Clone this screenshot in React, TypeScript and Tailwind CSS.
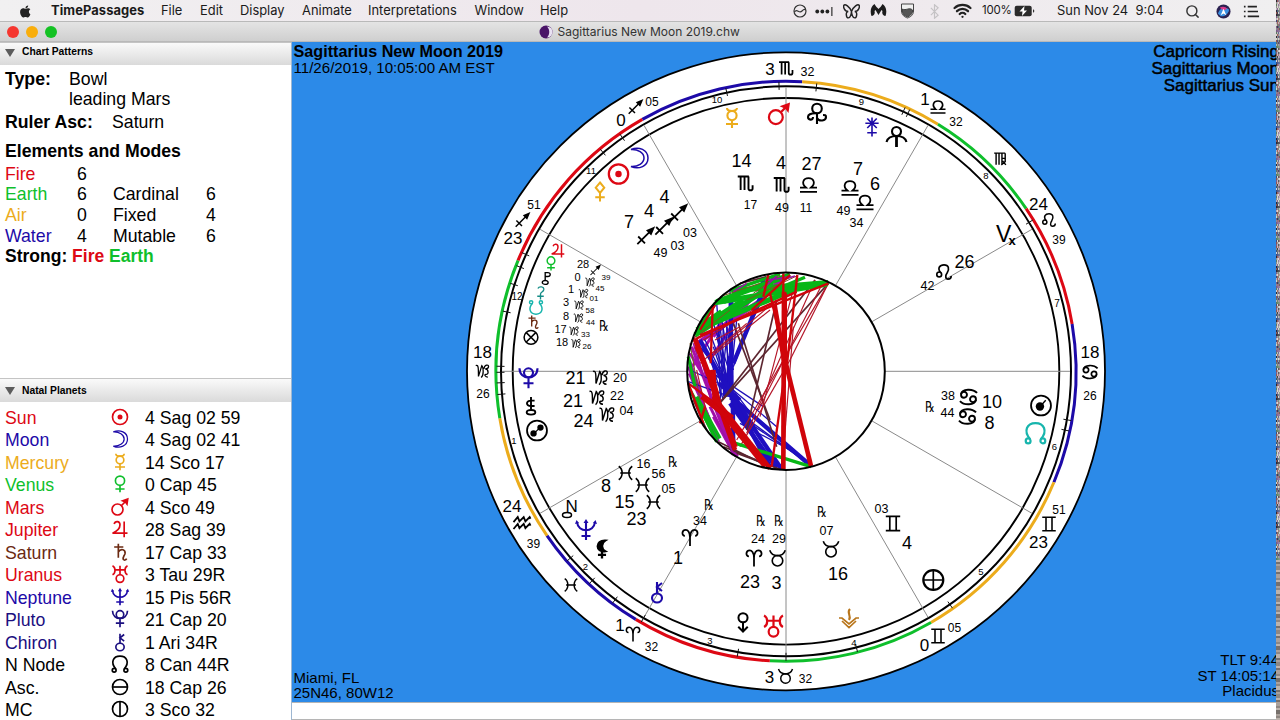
import { Search, Wifi } from "lucide-react";
import type { ReactNode } from "react";

const RED = "#dd0814";
const GREEN = "#0fbf2c";
const GOLD = "#ecac1c";
const BLUE = "#1d0aa8";
const BROWN = "#6b2a12";
const TEAL = "#17b5ad";

const CX = 786;
const CY = 371.3;

const polar = (deg: number, r: number) => {
  const a = (deg * Math.PI) / 180;
  return { x: CX + r * Math.cos(a), y: CY - r * Math.sin(a) };
};

// Every glyph is drawn around 0,0 in a box of about 20 units
const glyphs: Record<string, ReactNode> = {
  sun: (
    <>
      <circle r="9" />
      <circle r="3" fill="currentColor" stroke="none" />
    </>
  ),
  moon: (
    <path d="M-8-8.5C0-12 9-8 9 0S0 12-8 8.5C-1 9 5 5 5 0S-1-9-8-8.5Z" strokeWidth="1.5" />
  ),
  mercury: (
    <>
      <path d="M-5-10C-5-6 5-6 5-10M0 2.5V10M-6 6H6" />
      <circle cy="-2.4" r="4.6" />
    </>
  ),
  venus: (
    <>
      <circle cy="-4" r="5.5" />
      <path d="M0 1.5V10M-5.5 6H5.5" />
    </>
  ),
  mars: (
    <>
      <circle cx="-3" cy="3" r="6.6" />
      <path d="M1.5-1.5L8-8" />
      <path d="M10.5-11L9-1 6-5 .5-7.5Z" fill="currentColor" stroke="none" />
    </>
  ),
  jupiter: <path d="M-7-6C-6-10 0-10 0-5S-4 3-9 5H9M5-9V10" />,
  saturn: <path d="M-2-10V7M-7-6H4M-2 0C1-5 7-3 6 2 5 5 3 6 4 9 5 10 7 10 8 8" />,
  uranus: (
    <>
      <path d="M-9-10C-5-8-5-1-9 1M9-10C5-8 5-1 9 1M-6-5H6M0-10V1" />
      <circle cy="5.5" r="4.6" />
    </>
  ),
  neptune: (
    <>
      <path d="M-9-8C-8 3 8 3 9-8M0-8V10M-4.5 6H4.5" />
      <path
        d="M-11-6L-9.5-10-7-7ZM11-6L9.5-10 7-7ZM-2.5-7L0-11 2.5-7Z"
        fill="currentColor"
        stroke="none"
      />
    </>
  ),
  pluto: (
    <>
      <path d="M-9-10C-9 2.5 9 2.5 9-10M0-.5V10M-5 5H5" />
      <circle cy="-5.5" r="4.5" />
    </>
  ),
  chiron: (
    <>
      <path d="M0-10V1.5M5-9L0-5 5-1" />
      <ellipse cy="6" rx="5" ry="4.5" />
    </>
  ),
  node: (
    <>
      <path d="M-5 6C-12-2-8-9.5 0-9.5S12-2 5 6" />
      <circle cx="-7" cy="7.5" r="2.3" />
      <circle cx="7" cy="7.5" r="2.3" />
    </>
  ),
  snode: (
    <>
      <path d="M-5-6C-12 2-8 9.5 0 9.5S12 2 5-6" />
      <circle cx="-7" cy="-7.5" r="2.3" />
      <circle cx="7" cy="-7.5" r="2.3" />
    </>
  ),
  asc: (
    <>
      <circle r="9" />
      <path d="M-9 0H9" />
    </>
  ),
  mc: (
    <>
      <circle r="9" />
      <path d="M0-9V9" />
    </>
  ),
  ceres: <path d="M-4-7C-2-11 6-10 5-5 4-1 0-2 0 2V10M-5 5H5" />,
  pholus: (
    <>
      <path d="M-2 3V-9H2C7-9 7-3 2-3H-2" />
      <ellipse cx="-2" cy="6" rx="4.5" ry="3" />
    </>
  ),
  chariklo: (
    <>
      <path d="M0-10V4M4-6H0C-6-6-6 0 0 0H4" />
      <ellipse cy="7" rx="4.8" ry="2.6" />
    </>
  ),
  fortune: (
    <>
      <circle r="9.5" />
      <path d="M-6.5-6.5L6.5 6.5M6.5-6.5L-6.5 6.5" />
    </>
  ),
  binary: (
    <>
      <circle r="9.5" strokeWidth="1.7" />
      <path d="M-3 3L3-3" strokeWidth="1.2" />
      <circle cx="-3.3" cy="2.8" r="3" fill="currentColor" stroke="none" />
      <circle cx="3.3" cy="-2.8" r="3" fill="currentColor" stroke="none" />
    </>
  ),
  comet: (
    <>
      <circle r="9.5" strokeWidth="1.7" />
      <path d="M0 0L4.5-5" strokeWidth="1.3" />
      <circle cx="-1" cy="1" r="4" fill="currentColor" stroke="none" />
    </>
  ),
  pallas: <path d="M0-10L4.5-4.5 0 1-4.5-4.5ZM0 1V10M-5 5.5H5" />,
  sedna: (
    <>
      <circle cy="-5.5" r="4.8" />
      <path d="M0-.7C-7-1-9 1-9 3-9 6-4 7-4 3M0-.7V10M0 4C2 8 9 7 9 3 9 1 8 1 6 1" />
    </>
  ),
  orcus: (
    <>
      <circle cy="-5.5" r="4.5" />
      <path d="M-10 5C-9 1-5-1 0-1S9 1 10 5" />
      <path d="M0-1V10" strokeWidth="2.8" />
    </>
  ),
  juno: (
    <path d="M0-10V10M-7-4H7M-5-9L5 1M5-9L-5 1M-5 6H5" strokeWidth="1.7" />
  ),
  eris: (
    <>
      <circle cy="-5.5" r="4.8" />
      <path d="M0-1V9M-5 4L0 9 5 4" />
    </>
  ),
  vesta: (
    <>
      <path d="M-10-1H-7L0 5 7-1H10M-7 2L0 8.5 7 2" strokeWidth="1.7" />
      <path d="M1-10C-3-6 3-4 0 1" />
    </>
  ),
  earth: (
    <>
      <circle r="9.5" />
      <path d="M-9 0H9M0-9V9" strokeWidth="1.6" />
    </>
  ),
  lilith: (
    <>
      <path d="M4-10C-8-11-8 4 4 2-1-1-1-7 4-10Z" fill="currentColor" />
      <path d="M0 2V10M-4.5 6H4.5" strokeWidth="2.6" />
    </>
  ),
  aries: (
    <path d="M0 10V0C0-7-3-9-5-9-10-9-10-2-6-2M0 0C0-7 3-9 5-9 10-9 10-2 6-2" />
  ),
  taurus: (
    <>
      <circle cy="3.5" r="6.8" />
      <path d="M-10-10C-8-4-4-3 0-3S8-4 10-10" />
    </>
  ),
  gemini: <path d="M-9-9H9M-9 9H9M-4-9V9M4-9V9" />,
  cancer: (
    <>
      <circle cx="-5" cy="-2.5" r="3.3" />
      <circle cx="5" cy="2.5" r="3.3" />
      <path d="M-8.3-3C-7-9.5 5-9.5 9.5-4.5M8.3 3C7 9.5-5 9.5-9.5 4.5" />
    </>
  ),
  leo: (
    <>
      <circle cx="-6" cy="3" r="3" />
      <path d="M-4 1C-9-5-5-9 0-9 6-9 7-4 4 1 1 5 2 9 5 9 8 9 9 7 9 5" />
    </>
  ),
  virgo: (
    <path
      d="M-9-9H8M-6-9V9M-1.5-9V9M3-9V9M3-1H8V-9M8-1V4L2 9M4 3L9 9"
      strokeWidth="2.2"
    />
  ),
  libra: <path d="M-10 8H10M-10 3H-3C-9-2-6-8 0-8S9-2 3 3H10" />,
  scorpio: (
    <path
      d="M-10-8.5H3.5M-6.5-8.5V8M-1.8-8.5V8M3-8.5V6C3 9 8 9 8 6V2"
      strokeWidth="2.3"
    />
  ),
  sagittarius: (
    <>
      <path d="M-9 9L7-7M-8 0L0 8" />
      <path d="M10-10L3-7 7-3Z" fill="currentColor" />
    </>
  ),
  capricorn: (
    <path
      d="M-10-8C-6-10-6-4-6 8L-1-8C1-6 1-3 1 1 1 5 0 8-2 9.5M2-3C3-10 9-10 9-6.500 9-3 5-3 4-3 10-2 9 6 5 5 2 5 4 9 8 9"
      strokeWidth="1.9"
    />
  ),
  aquarius: (
    <path d="M-10-1L-5-7-3-2 2-7 4-2 9-7 10-5M-10 7L-5 1-3 6 2 1 4 6 9 1 10 3" />
  ),
  pisces: <path d="M-9-9C-3-5-3 5-9 9M9-9C3-5 3 5 9 9M-7 0H7" />,
};

type GlyphProps = {
  name: string;
  x?: number;
  y?: number;
  size?: number;
  color?: string;
  weight?: number;
};

const Glyph = ({
  name,
  x = 0,
  y = 0,
  size = 20,
  color = "#000",
  weight = 2.1,
}: GlyphProps) => (
  <g
    transform={`translate(${x} ${y}) scale(${size / 20})`}
    color={color}
    stroke="currentColor"
    fill="none"
    strokeWidth={weight}
  >
    {glyphs[name]}
  </g>
);

// Element colour of each sign, between two angles on the ring
const arcs: [number, number, string][] = [
  [119.7, 86.8, BLUE],
  [86.8, 58.4, GOLD],
  [58.4, 34.1, GREEN],
  [34.1, 9.4, RED],
  [9.4, -22.5, BLUE],
  [-22.5, -60, GOLD],
  [-60, -93.2, GREEN],
  [-93.2, -121.2, RED],
  [-121.2, -145.5, BLUE],
  [-145.5, -170.7, GOLD],
  [-170.7, -202.5, GREEN],
  [157.5, 119.7, RED],
];

const ticks = [
  125, 129.9, 155.8, 158.6, 162.3, 168, 179, 180.2, 182.3, 184.6, 102, 91.4,
  83.9, 65.7, 64.7, 31.5, -9.8, -11.9, -54.9, -75.7, -90, -99.7, -120, -126.8,
  -132.8, -139.1,
];

const planets: [string, number, number, number, string][] = [
  ["mercury", 732, 118, 20, GOLD],
  ["mars", 779, 114, 21, RED],
  ["sedna", 817, 114, 20, "#000"],
  ["juno", 872, 127, 19, BLUE],
  ["orcus", 896.5, 137, 20, "#000"],
  ["comet", 1041, 405.5, 21, "#000"],
  ["node", 1035.5, 433, 21, TEAL],
  ["earth", 933.3, 580, 21, "#000"],
  ["vesta", 849, 619, 20, "#b8751b"],
  ["uranus", 773.5, 626, 21, RED],
  ["eris", 743, 623, 19, "#000"],
  ["chiron", 657, 592, 20, BLUE],
  ["lilith", 602, 549.5, 18, "#000"],
  ["neptune", 586, 530, 20, BLUE],
  ["binary", 537, 430.5, 21, "#000"],
  ["chariklo", 531, 406, 18, "#000"],
  ["pluto", 528.5, 378.3, 20, BLUE],
  ["fortune", 531, 337.3, 14.5, "#000"],
  ["saturn", 533, 322, 13, BROWN],
  ["snode", 536, 307.5, 14, TEAL],
  ["ceres", 540.5, 293, 13, "#148c86"],
  ["pholus", 546.5, 278.5, 13, "#000"],
  ["venus", 551, 263.5, 14, GREEN],
  ["jupiter", 558, 250.5, 14, RED],
  ["pallas", 600, 192, 19, GOLD],
  ["sun", 618.5, 174, 21.5, RED],
  ["moon", 639, 158, 20, BLUE],
];

const signs: [string, number, number, number][] = [
  // Cusps
  ["scorpio", 786.5, 68.5, 15],
  ["libra", 938, 107, 15],
  ["virgo", 1000, 159, 13],
  ["leo", 1049, 220, 14],
  ["cancer", 1090, 372, 16],
  ["gemini", 1049, 524, 15],
  ["gemini", 938, 636, 15],
  ["taurus", 785.5, 676, 14],
  ["aries", 633, 634, 15],
  ["aquarius", 522, 523, 17],
  ["pisces", 571, 585, 14],
  ["capricorn", 482.5, 371, 13.5],
  ["sagittarius", 522, 220.5, 14],
  ["sagittarius", 635, 107.5, 14],
  // Bodies
  ["scorpio", 746, 183.5, 16.5],
  ["scorpio", 782, 185, 16.5],
  ["libra", 808.5, 185, 17],
  ["libra", 850, 188, 17],
  ["libra", 865, 202.5, 17],
  ["leo", 944, 272, 16],
  ["cancer", 968.5, 397, 18],
  ["cancer", 967.5, 416.5, 18],
  ["gemini", 893, 523.5, 16],
  ["taurus", 831, 549, 15.5],
  ["taurus", 777.5, 558, 15.5],
  ["aries", 754, 558, 17],
  ["aries", 690, 537.5, 17],
  ["pisces", 625.5, 473, 15],
  ["pisces", 642.5, 485, 15],
  ["pisces", 653.5, 502, 15],
  ["capricorn", 607, 414.5, 15],
  ["capricorn", 597, 397.5, 15],
  ["capricorn", 600.5, 377.5, 15],
  ["sagittarius", 595, 270.5, 10],
  ["capricorn", 590, 282, 9.5],
  ["capricorn", 583.5, 293.5, 9.5],
  ["capricorn", 579, 305, 9.5],
  ["capricorn", 578.5, 318, 9.5],
  ["capricorn", 574, 331, 9.5],
  ["capricorn", 576, 343.5, 9.5],
  ["sagittarius", 645, 236.5, 17],
  ["sagittarius", 663, 227, 17],
  ["sagittarius", 678, 213.5, 17],
];

const labels: [string, number, number, number][] = [
  // Cusp degrees and minutes
  ["3", 770, 69, 17],
  ["32", 807.5, 71.5, 12.5],
  ["1", 925, 99, 17],
  ["32", 956, 122, 12],
  ["24", 1038.5, 203.5, 17],
  ["39", 1059, 240, 12],
  ["18", 1090, 352, 17],
  ["26", 1090, 395.5, 12],
  ["51", 1059, 510, 12],
  ["23", 1038.5, 542, 17],
  ["05", 954.5, 627.5, 12],
  ["0", 924.5, 645, 17],
  ["3", 769.5, 677, 17],
  ["32", 805.5, 678.5, 12],
  ["1", 620, 624.5, 17],
  ["32", 651.5, 647, 12],
  ["24", 512, 505.5, 17],
  ["39", 533.5, 544, 12],
  ["18", 482.5, 352, 17],
  ["26", 483, 394, 12],
  ["23", 513, 238, 17],
  ["51", 534, 204.5, 12],
  ["0", 621, 120, 17],
  ["05", 652, 101.5, 12],
  // House numbers
  ["10", 717, 100, 9.5],
  ["9", 861.5, 101.5, 9.5],
  ["8", 986, 176, 9.5],
  ["7", 1057, 303.5, 10],
  ["6", 1054.5, 447, 9.5],
  ["5", 981, 572, 9.5],
  ["4", 854, 643, 9.5],
  ["3", 710, 641, 9.5],
  ["2", 585.5, 567, 9.5],
  ["1", 514, 440.5, 9.5],
  ["12", 517, 296, 10],
  ["11", 591, 171, 9.5],
  // Body degrees and minutes
  ["14", 741.5, 161, 18],
  ["17", 750.5, 205, 12],
  ["4", 781, 163, 18],
  ["49", 782, 207, 12.5],
  ["27", 811.5, 163.5, 18],
  ["11", 806, 208, 12],
  ["7", 858, 169, 18],
  ["49", 843.5, 210, 12.5],
  ["6", 875, 183.5, 18],
  ["34", 856.5, 222.5, 12.5],
  ["26", 964.5, 261.5, 18],
  ["42", 927.5, 285, 12.5],
  ["38", 948, 395, 12.5],
  ["10", 992, 401.5, 18],
  ["44", 947.5, 412, 12.5],
  ["8", 989.5, 423, 18],
  ["03", 881.5, 508, 12.5],
  ["4", 907, 543, 18],
  ["07", 826.5, 530.5, 12.5],
  ["16", 838, 573.5, 18],
  ["29", 779, 538.5, 12.5],
  ["3", 776.5, 582.5, 18],
  ["24", 758, 538.5, 12.5],
  ["23", 750, 582, 18],
  ["34", 700, 520.5, 12.5],
  ["1", 678, 558, 18],
  ["16", 643.5, 463, 12.5],
  ["8", 606, 486, 18],
  ["56", 658.5, 473, 12.5],
  ["15", 624.5, 501.5, 18],
  ["05", 668.5, 488, 12.5],
  ["23", 636.5, 519, 18],
  ["24", 583.5, 420.5, 18],
  ["04", 626.5, 410.5, 12.5],
  ["21", 573, 401, 18],
  ["22", 617, 395, 12.5],
  ["21", 575.5, 378, 18],
  ["20", 620, 377.5, 12.5],
  ["28", 583, 264.5, 11],
  ["39", 606, 277.5, 8],
  ["0", 577.5, 277, 11],
  ["45", 600, 288, 8],
  ["1", 571, 289.5, 11],
  ["01", 594, 298.5, 8],
  ["3", 566, 302.5, 11],
  ["58", 590, 310, 8],
  ["8", 566, 316, 11],
  ["44", 590.5, 322.5, 8],
  ["17", 560.5, 329.5, 11],
  ["33", 585.5, 334, 8],
  ["18", 562, 342.5, 11],
  ["26", 587, 346.5, 8],
  ["7", 629, 221.5, 18],
  ["49", 660.5, 252, 12.5],
  ["4", 649, 211, 18],
  ["03", 677.5, 245, 12.5],
  ["4", 664.5, 196.5, 18],
  ["03", 690, 232, 12.5],
];

const retrogrades: [number, number][] = [
  [930, 406.5],
  [822, 511.5],
  [779, 520],
  [761, 520],
  [709, 504],
  [673, 461],
  [604, 325.5],
];

// Aspect lines: color, width, then x1 y1 x2 y2 in thirds of a pixel from 680,260
const aspects: [string, number, number[][]][] = [
  [
    "#a80fae",
    9,
    [
      [330, 45, 60, 215],
      [285, 50, 100, 230],
      [240, 120, 55, 245],
      [220, 140, 70, 240],
      [210, 120, 150, 200],
      [45, 240, 170, 590],
      [35, 260, 160, 585],
      [25, 320, 115, 545],
      [55, 245, 95, 420],
      [110, 450, 172, 590],
      [90, 440, 160, 580],
      [100, 470, 150, 560],
      [30, 280, 90, 380],
      [28, 300, 70, 420],
      [28, 340, 90, 480],
      [140, 160, 30, 330],
      [160, 190, 90, 300],
    ],
  ],
  [
    "#1f0fb8",
    4,
    [
      [265, 48, 160, 320],
      [280, 48, 160, 300],
      [160, 90, 150, 340],
      [150, 90, 160, 570],
      [135, 160, 160, 330],
      [100, 190, 150, 340],
      [90, 220, 145, 370],
      [75, 240, 150, 390],
      [60, 245, 170, 430],
      [45, 240, 220, 470],
      [85, 330, 250, 440],
      [100, 340, 290, 500],
      [170, 420, 393, 615],
      [165, 450, 393, 618],
      [180, 490, 330, 570],
      [180, 470, 390, 612],
      [120, 200, 140, 370],
      [110, 130, 130, 370],
      [110, 230, 150, 390],
      [100, 260, 140, 380],
      [130, 200, 125, 350],
      [30, 330, 160, 390],
      [25, 365, 150, 410],
      [140, 230, 120, 420],
      [125, 180, 150, 320],
      [115, 210, 120, 400],
      [105, 320, 170, 440],
      [95, 310, 130, 420],
      [140, 200, 145, 400],
      [170, 180, 155, 330],
    ],
  ],
  [
    "#1f0fc0",
    13,
    [
      [240, 115, 160, 310],
      [152, 110, 155, 420],
      [60, 240, 150, 400],
      [150, 290, 150, 400],
      [150, 290, 140, 410],
      [135, 340, 135, 410],
      [140, 380, 270, 620],
      [150, 400, 305, 628],
      [150, 430, 290, 625],
      [170, 425, 393, 618],
      [158, 400, 160, 570],
      [250, 55, 240, 120],
      [115, 370, 180, 420],
      [130, 360, 220, 500],
      [160, 420, 200, 500],
    ],
  ],
  [
    "#5c2630",
    5,
    [
      [445, 70, 105, 445],
      [405, 60, 110, 440],
      [290, 120, 200, 510],
      [175, 190, 290, 560],
      [160, 190, 270, 480],
      [40, 420, 80, 510],
      [115, 545, 270, 622],
      [170, 580, 300, 628],
      [180, 70, 260, 50],
      [130, 560, 230, 600],
    ],
  ],
  [
    "#b31528",
    3.5,
    [
      [445, 70, 330, 300],
      [445, 70, 170, 540],
      [405, 60, 200, 520],
      [430, 65, 235, 450],
      [340, 200, 310, 580],
      [350, 50, 240, 470],
      [330, 300, 180, 560],
      [110, 130, 40, 240],
      [95, 290, 270, 150],
      [70, 240, 300, 100],
      [100, 280, 290, 120],
      [105, 240, 180, 200],
      [80, 460, 50, 330],
      [60, 310, 200, 190],
    ],
  ],
  [
    "#08b616",
    16,
    [
      [445, 68, 155, 92],
      [440, 72, 105, 128],
      [350, 85, 50, 210],
      [330, 45, 110, 125],
      [280, 75, 45, 225],
      [200, 85, 130, 125],
      [125, 155, 60, 200],
      [190, 120, 60, 205],
    ],
  ],
  [
    "#08b616",
    10,
    [
      [300, 42, 150, 92],
      [375, 52, 260, 100],
      [25, 290, 45, 380],
      [30, 390, 110, 540],
      [50, 410, 120, 535],
      [60, 440, 110, 545],
      [160, 548, 393, 620],
      [105, 130, 55, 210],
    ],
  ],
  [
    "#7c5520",
    3,
    [
      [300, 45, 220, 100],
      [350, 48, 200, 120],
      [240, 70, 120, 110],
      [150, 150, 60, 220],
      [30, 250, 60, 420],
    ],
  ],
  [
    "#9b12a4",
    5,
    [
      [330, 50, 255, 62],
      [290, 48, 250, 85],
      [345, 48, 300, 62],
      [200, 70, 160, 95],
      [40, 250, 100, 440],
      [95, 450, 165, 590],
    ],
  ],
  [
    "#d0040a",
    7,
    [
      [445, 70, 60, 225],
      [350, 95, 50, 235],
      [40, 235, 110, 420],
      [98, 140, 92, 310],
      [105, 135, 60, 210],
      [270, 100, 320, 320],
      [330, 45, 215, 150],
      [320, 300, 275, 620],
      [352, 45, 320, 320],
      [310, 40, 310, 620],
      [265, 45, 250, 110],
      [25, 370, 160, 470],
      [25, 370, 70, 490],
      [50, 245, 170, 560],
      [75, 440, 60, 490],
    ],
  ],
  [
    "#d0040a",
    14,
    [
      [312, 95, 310, 628],
      [314, 100, 314, 330],
      [315, 300, 393, 618],
      [312, 300, 283, 130],
      [45, 235, 105, 390],
      [50, 260, 110, 400],
      [92, 330, 120, 440],
      [100, 330, 105, 440],
      [90, 360, 165, 570],
      [100, 410, 270, 625],
      [120, 450, 255, 620],
      [65, 410, 140, 470],
    ],
  ],
];

const AspectWeb = () => (
  <g transform="translate(680 260) scale(.33333)">
    {aspects.map(([color, width, lines], i) => (
      <g key={i} stroke={color} strokeWidth={width}>
        {lines.map(([x1, y1, x2, y2], j) => (
          <line key={j} x1={x1} y1={y1} x2={x2} y2={y2} />
        ))}
      </g>
    ))}
  </g>
);

const Wheel = () => (
  <svg
    viewBox="292 42 984 660"
    className="block h-[660px] w-[984px] font-['Liberation_Sans',sans-serif]"
  >
    <circle cx={CX} cy={CY} r="319" fill="#fff" stroke="#000" strokeWidth="1.8" />
    {arcs.map(([from, to, color]) => {
      const a = polar(from, 290);
      const b = polar(to, 290);
      return (
        <path
          key={from}
          d={`M${a.x} ${a.y}A290 290 0 0 1 ${b.x} ${b.y}`}
          fill="none"
          stroke={color}
          strokeWidth="3"
        />
      );
    })}
    <circle cx={CX} cy={CY} r="285" fill="none" stroke="#000" strokeWidth="2" />
    <circle cx={CX} cy={CY} r="273.3" fill="none" stroke="#000" strokeWidth="1.9" />

    {[0, 30, 60, 90, 120, 150, 180, 210, 240, 270, 300, 330].map((deg) => {
      const a = polar(deg, 99);
      const b = polar(deg, 284);
      return (
        <line key={deg} x1={a.x} y1={a.y} x2={b.x} y2={b.y} stroke="#8a8a8a" />
      );
    })}
    {ticks.map((deg) => {
      const a = polar(deg, 281.5);
      const b = polar(deg, 289.5);
      return (
        <line key={deg} x1={a.x} y1={a.y} x2={b.x} y2={b.y} stroke="#111" />
      );
    })}

    <AspectWeb />
    <circle cx={CX} cy={CY} r="98.8" fill="none" stroke="#000" strokeWidth="2" />

    {planets.map(([name, x, y, size, color]) => (
      <Glyph key={name} name={name} x={x} y={y} size={size} color={color} />
    ))}
    {signs.map(([name, x, y, size], i) => (
      <Glyph key={i} name={name} x={x} y={y} size={size} />
    ))}
    {labels.map(([text, x, y, size], i) => (
      <text key={i} x={x} y={y + size * 0.36} fontSize={size} textAnchor="middle">
        {text}
      </text>
    ))}
    {retrogrades.map(([x, y]) => (
      <text
        key={x}
        transform={`translate(${x} ${y + 5.5}) scale(.72 1)`}
        fontSize="15"
        textAnchor="middle"
        className="font-['DejaVu_Sans',sans-serif]"
      >
        ℞
      </text>
    ))}

    {/* Nessus */}
    <text x="565.5" y="511.5" fontSize="17">
      N
    </text>
    <ellipse cx="567" cy="515" rx="4.5" ry="2.5" fill="none" stroke="#000" strokeWidth="1.5" />

    {/* Vertex */}
    <text x="996" y="242" fontSize="23">
      V
    </text>
    <text x="1008.5" y="244.5" fontSize="13" fontWeight="700">
      x
    </text>
  </svg>
);

const natal: [string, string, string, string][] = [
  ["Sun", "sun", "4 Sag 02 59", RED],
  ["Moon", "moon", "4 Sag 02 41", BLUE],
  ["Mercury", "mercury", "14 Sco 17", GOLD],
  ["Venus", "venus", "0 Cap 45", GREEN],
  ["Mars", "mars", "4 Sco 49", RED],
  ["Jupiter", "jupiter", "28 Sag 39", RED],
  ["Saturn", "saturn", "17 Cap 33", BROWN],
  ["Uranus", "uranus", "3 Tau 29R", RED],
  ["Neptune", "neptune", "15 Pis 56R", BLUE],
  ["Pluto", "pluto", "21 Cap 20", "#1b0f80"],
  ["Chiron", "chiron", "1 Ari 34R", "#1b0f80"],
  ["N Node", "node", "8 Can 44R", "#000"],
  ["Asc.", "asc", "18 Cap 26", "#000"],
  ["MC", "mc", "3 Sco 32", "#000"],
];

const elements: [string, string, string, string, string][] = [
  ["Fire", "text-[#dd0814]", "6", "", ""],
  ["Earth", "text-[#0fbf2c]", "6", "Cardinal", "6"],
  ["Air", "text-[#ecac1c]", "0", "Fixed", "4"],
  ["Water", "text-[#1d0aa8]", "4", "Mutable", "6"],
];

const PanelHeader = ({ title, className }: { title: string; className: string }) => (
  <div
    className={`flex shrink-0 items-center border-t border-[#c4c4c4] bg-linear-to-b from-[#fafafa] to-[#dadada] pl-[5px] ${className}`}
  >
    <span className="h-0 w-0 border-x-[5px] border-t-[8px] border-x-transparent border-t-[#5c5c5c]" />
    <span className="ml-[7px] text-[10.3px] font-bold">{title}</span>
  </div>
);

const Sidebar = () => (
  <aside className="flex w-[292px] flex-col border-r border-[#9db7d2] bg-white text-[17.7px] leading-[20.6px]">
    <PanelHeader title="Chart Patterns" className="h-[23px] pb-[3px]" />
    <div className="h-[313px] shrink-0 pt-[3.5px] pl-[5px]">
      <div className="flex">
        <b className="w-16">Type:</b>
        <span>
          Bowl
          <br />
          leading Mars
        </span>
      </div>
      <div className="mt-[2px] flex">
        <b className="w-[107px]">Ruler Asc:</b>
        <span>Saturn</span>
      </div>
      <b className="mt-[9px] mb-[2px] block">Elements and Modes</b>
      {elements.map(([name, color, count, mode, modeCount]) => (
        <div key={name} className="flex">
          <span className={`w-[72px] ${color}`}>{name}</span>
          <span className="w-9">{count}</span>
          <span className="w-[93px]">{mode}</span>
          <span>{modeCount}</span>
        </div>
      ))}
      <b className="text-[17.5px]">
        Strong: <span className="text-[#dd0814]">Fire</span>{" "}
        <span className="text-[#0fbf2c]">Earth</span>
      </b>
    </div>
    <PanelHeader title="Natal Planets" className="h-[24px] pt-px" />
    <div className="pt-[5px] pl-[5px]">
      {natal.map(([name, glyph, position, color]) => (
        <div key={name} className="flex h-[22.5px] items-center">
          <span className="w-[105px]" style={{ color }}>
            {name}
          </span>
          <svg viewBox="-12 -12 24 24" className="mb-[3px] h-5 w-5">
            <Glyph name={glyph} color={color} weight={2} />
          </svg>
          <span className="ml-[15px]">{position}</span>
        </div>
      ))}
    </div>
  </aside>
);

const MenuBar = () => (
  <div className="flex h-[21px] shrink-0 items-center bg-linear-to-r from-[#f1f0f1] via-[#eee6ec] to-[#f0eff0] pt-px pl-[19px] font-['Inter',sans-serif] text-[12.9px] text-[#1a1a1a]">
    <svg viewBox="0 0 24 24" className="mr-[19px] h-[15px] w-[13px]" fill="#222">
      <path d="M17 1c0 3-2 5-5 5 0-3 2-5 5-5zM21 17c-1 3-3 6-5 6-1.5 0-2-1-4-1s-2.500 1-4 1c-3 0-6-6-6-10 0-5 3-7 5.5-7 2 0 3 1 4.500 1s3-1 5-1c1.500 0 3 .8 4 2-4 2.500-3 7.500 0 9z" />
    </svg>
    <span className="w-[110px] font-bold tracking-[0.1px]">TimePassages</span>
    <span className="w-[39px]">File</span>
    <span className="w-[40px]">Edit</span>
    <span className="w-[62px]">Display</span>
    <span className="w-[66px]">Animate</span>
    <span className="w-[106.5px]">Interpretations</span>
    <span className="w-[65.5px]">Window</span>
    <span className="w-[253px]">Help</span>

    <svg viewBox="0 0 14 14" className="h-[14px] w-[14px]" fill="none" stroke="#333" strokeWidth="1.2">
      <circle cx="7" cy="7" r="6" />
      <path d="M1.5 8C4 4 6 10 9 7s3-1 4-1" />
    </svg>
    <svg viewBox="0 0 16 8" className="ml-[8px] h-[9px] w-[18px]" fill="#222">
      <circle cx="2" cy="4" r="1.7" />
      <circle cx="6.5" cy="4" r="1.7" />
      <circle cx="11" cy="4" r="1.7" />
      <path d="M14.5 0h1v8h-1z" />
    </svg>
    <svg viewBox="0 0 16 16" className="ml-[10px] h-[17px] w-[17px]" fill="none" stroke="#222" strokeWidth="1.4">
      <path d="M8 8C6 3 2 1 1 2s0 6 4 6c-3 0-2 6 0 6s3-4 3-6zM8 8c2-5 6-7 7-6s0 6-4 6c3 0 2 6 0 6S8 10 8 8z" />
    </svg>
    <svg viewBox="0 0 16 14" className="ml-[10px] h-[14px] w-[17px]" fill="#1c1c1c">
      <path d="M1 12C-1 6 1 2 4 0c1 2 3 4 4 5 1-1 3-3 4-5 3 2 5 6 3 12-2 0-4-2-3-5l-1-1-3 5-3-5-1 1c1 3-1 5-3 5z" />
    </svg>
    <svg viewBox="0 0 14 16" className="ml-[13px] h-4 w-[15px]" stroke="#444">
      <path d="M1 1h12v7c0 4-3 6-6 7-3-1-6-3-6-7z" fill="#f0f0f0" />
      <path d="M2 6c3 2 7-2 10 1v2c-1 3-3 4-5 5-3-1-5-3-5-5z" fill="#555" />
    </svg>
    <svg viewBox="0 0 10 16" className="ml-[15px] h-[15px] w-[9px]" fill="none" stroke="#c4c2c4" strokeWidth="1.3">
      <path d="M1 4l8 8-4 3.5V.5L9 4l-8 8" />
    </svg>
    <Wifi className="mb-px ml-[14px] shrink-0" size={19} strokeWidth={2.9} color="#222" />
    <span className="ml-[10px] w-[32px] text-[11.5px] tracking-[-0.2px]">100%</span>
    <svg viewBox="0 0 21 12" className="h-3 w-[21px] shrink-0">
      <rect x=".7" y=".7" width="17" height="10.6" rx="2" fill="#2b2b2b" />
      <path d="M19 4v4l1.5-2z" fill="#2b2b2b" />
      <path d="M10.5 1L5.5 6.5h3L8 11l5-5.5h-3z" fill="#fff" />
    </svg>
    <span className="ml-[22px] w-[128px] whitespace-pre">Sun Nov 24  9:04</span>
    <Search size={15} strokeWidth={2.3} color="#333" className="shrink-0" />
    <svg viewBox="0 0 16 16" className="ml-[16px] h-[15px] w-[15px] shrink-0">
      <circle cx="8" cy="8" r="7.5" fill="#2b2150" />
      <path d="M2 10C5 3 10 3 14 6c-1 5-6 8-9 7z" fill="#3b8fe0" />
      <path d="M4 4c3-2 6-1 8 1L8 7z" fill="#d93a8c" />
      <path d="M8 5l3 7-3-2-3 2z" fill="#fff" />
    </svg>
    <svg viewBox="0 0 14 12" className="ml-[12px] h-[13px] w-[17px] shrink-0" stroke="#222" strokeWidth="1.6">
      <path d="M0 1.5h1.5M3.5 1.5H12M0 6h1.5M3.5 6H13M0 10.5h1.5M3.5 10.5H14" />
    </svg>
  </div>
);

const TitleBar = () => (
  <div className="flex h-[21px] shrink-0 items-center border-t border-b border-[#b9b9b9] bg-linear-to-b from-[#e4e4e4] to-[#cfcfcf] pt-px pl-[7px]">
    <span className="h-[12px] w-[12px] rounded-full bg-[#f5362f]" />
    <span className="ml-[7px] h-[12px] w-[12px] rounded-full bg-[#f9ae0c]" />
    <span className="ml-[7px] h-[12px] w-[12px] rounded-full bg-[#14c224]" />
    <svg viewBox="0 0 14 14" className="ml-[482px] h-[14px] w-[14px]">
      <circle cx="7" cy="7" r="6.5" fill="#4a1468" />
      <path d="M8 1.500a5.500 5.500 0 0 1 0 11c3-3 3-8 0-11z" fill="#e9e2f2" />
    </svg>
    <span className="ml-[4.5px] font-['Inter',sans-serif] text-[12px] text-[#333]">
      Sagittarius New Moon 2019.chw
    </span>
  </div>
);

const noiseColors = ["#2d2a33", "#b9aeb4", "#7a5a86", "#d8d2cc", "#5b7a5e", "#94504f", "#3f4a7a", "#8d8a88"];

// Noisy sliver at the right edge; below 560 it turns into plain scan lines
const EdgeStrip = () => (
  <svg viewBox="0 0 4 720" className="absolute top-0 right-0 h-[720px] w-[4.5px]" preserveAspectRatio="none">
    {Array.from({ length: 360 }, (_, row) =>
      row < 280 ? (
        [0, 1, 2, 3].map((col) => (
          <rect
            key={`${row}-${col}`}
            x={col}
            y={row * 2}
            width="1"
            height="2"
            fill={noiseColors[(row * row * 7 + col * 13 + row * col * 5 + (row >> 2)) % 8]}
          />
        ))
      ) : (
        <rect
          key={row}
          y={row * 2}
          width="4"
          height="2"
          fill={["#aaa09a", "#77706c", "#bdb3ac", "#8f8782"][(row * 3 + (row >> 2)) % 4]}
        />
      )
    )}
  </svg>
);

export default function App() {
  return (
    <div className="relative flex h-[720px] w-[1280px] flex-col overflow-hidden bg-white font-['Liberation_Sans',sans-serif] text-black">
      <MenuBar />
      <TitleBar />
      <div className="flex h-[678px]">
        <Sidebar />
        <main className="w-[984px]">
          <div className="relative h-[660px] overflow-hidden bg-[#2c8ae8]">
            <Wheel />
            <div className="absolute top-[1px] left-[1.5px] text-[15.1px] leading-[16.8px] whitespace-nowrap">
              <div className="text-[16.2px] font-bold">Sagittarius New Moon 2019</div>
              <div>11/26/2019, 10:05:00 AM EST</div>
            </div>
            <div className="absolute top-[1px] right-[-3px] text-right text-[17px] leading-[17.2px] whitespace-nowrap [-webkit-text-stroke:0.5px_#000]">
              Capricorn Rising
              <br />
              Sagittarius Moon
              <br />
              Sagittarius Sun
            </div>
            <div className="absolute bottom-[2px] left-[1.5px] text-[15px] leading-[15px]">
              Miami, FL
              <br />
              25N46, 80W12
            </div>
            <div className="absolute right-[-3px] bottom-[3px] text-right text-[15px] leading-[15.7px] whitespace-nowrap">
              TLT 9:44
              <br />
              ST 14:05:14
              <br />
              Placidus
            </div>
          </div>
          <div className="h-[18px] border-t border-b border-[#b5b5b5] bg-white" />
        </main>
      </div>
      <EdgeStrip />
    </div>
  );
}
